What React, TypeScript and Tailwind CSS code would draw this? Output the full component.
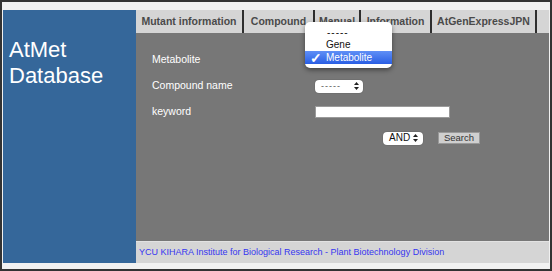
import React from "react";

const TABS = [
  { label: "Mutant information", w: "w-[108px]" },
  { label: "Compound", w: "w-[71px]" },
  { label: "Manual", w: "w-[46px]" },
  { label: "Information", w: "w-[71px]" },
  { label: "AtGenExpressJPN", w: "w-[105px]" },
];

function Arrows() {
  return (
    <svg width="5" height="8" viewBox="0 0 5 8" className="shrink-0">
      <path d="M2.5 0 L5 3 L0 3 Z" fill="#222" />
      <path d="M0 5 L5 5 L2.5 8 Z" fill="#222" />
    </svg>
  );
}

export default function App() {
  return (
    <div className="h-[271px] w-[552px] border-2 border-[#333] bg-[#f1f1f1] font-['Liberation_Sans',Arial,sans-serif]">
      <div className="flex h-full flex-col pt-[8px] pr-px pb-[6px] pl-px">
        <div className="flex flex-1">
          {/* left title panel */}
          <div className="w-[133px] bg-[#35679a] pt-[27px] pl-[6px] text-[22px] leading-[26px] text-white">
            AtMet
            <br />
            Database
          </div>

          {/* right side */}
          <div className="relative flex flex-1 flex-col">
            <div className="flex h-[23px] bg-[#d5d5d5]">
              {TABS.map((t) => (
                <div
                  key={t.label}
                  className={`${t.w} flex items-center justify-center border-r-2 border-[#2e2e2e] text-[10.5px] font-bold text-[#4a4a4a]`}
                >
                  {t.label}
                </div>
              ))}
            </div>

            <div className="flex-1 bg-[#777777] pt-[14px] pl-[16px] text-[10.5px] text-white">
              <div className="flex h-[26px] items-center">
                <div className="w-[163px]">Metabolite</div>
              </div>
              <div className="flex h-[26px] items-center">
                <div className="w-[163px]">Compound name</div>
                <div className="flex h-[13px] w-[48px] items-center justify-between rounded-[4px] bg-white pr-[4px] pl-[6px] text-[9px] leading-none tracking-[1px] text-[#555] shadow-[0_0_1px_rgba(0,0,0,0.5)]">
                  -----
                  <Arrows />
                </div>
              </div>
              <div className="flex h-[26px] items-center">
                <div className="w-[163px]">keyword</div>
                <div className="h-[12px] w-[135px] border border-[#9a9a9a] bg-white" />
              </div>
              <div className="flex h-[26px] items-center">
                <div className="w-[231px]" />
                <div className="flex h-[13px] w-[40px] items-center justify-between rounded-[4px] bg-white pr-[5px] pl-[6px] text-[10px] leading-none text-[#111] shadow-[0_0_1px_rgba(0,0,0,0.5)]">
                  AND
                  <Arrows />
                </div>
                <div className="ml-[15px] flex h-[12px] w-[42px] items-center justify-center border border-[#999] bg-[#cfcfcf] text-[9.5px] leading-none text-[#333]">
                  Search
                </div>
              </div>
            </div>

            <div className="flex h-[22px] items-center border-t border-[#e2e2e2] bg-[#d5d5d5] pl-[3px] text-[9px] text-[#3535f0]">
              YCU KIHARA Institute for Biological Research - Plant Biotechnology Division
            </div>

            {/* open select menu */}
            <div className="absolute top-[12px] left-[169px] w-[87px] rounded-[5px] bg-white py-[4px] text-[10px] leading-none text-[#111] shadow-[0_2px_5px_rgba(0,0,0,0.45)]">
              <div className="flex h-[13px] items-center pl-[22px] tracking-[1px]">-----</div>
              <div className="flex h-[12px] items-center pl-[21px]">Gene</div>
              <div className="flex h-[13px] items-center bg-linear-to-b from-[#5f8ff6] to-[#2a5ee4] pl-[5px] text-white">
                <span className="w-[16px] text-[14px] leading-none font-bold">✓</span>
                Metabolite
              </div>
            </div>
          </div>
        </div>
      </div>
    </div>
  );
}
